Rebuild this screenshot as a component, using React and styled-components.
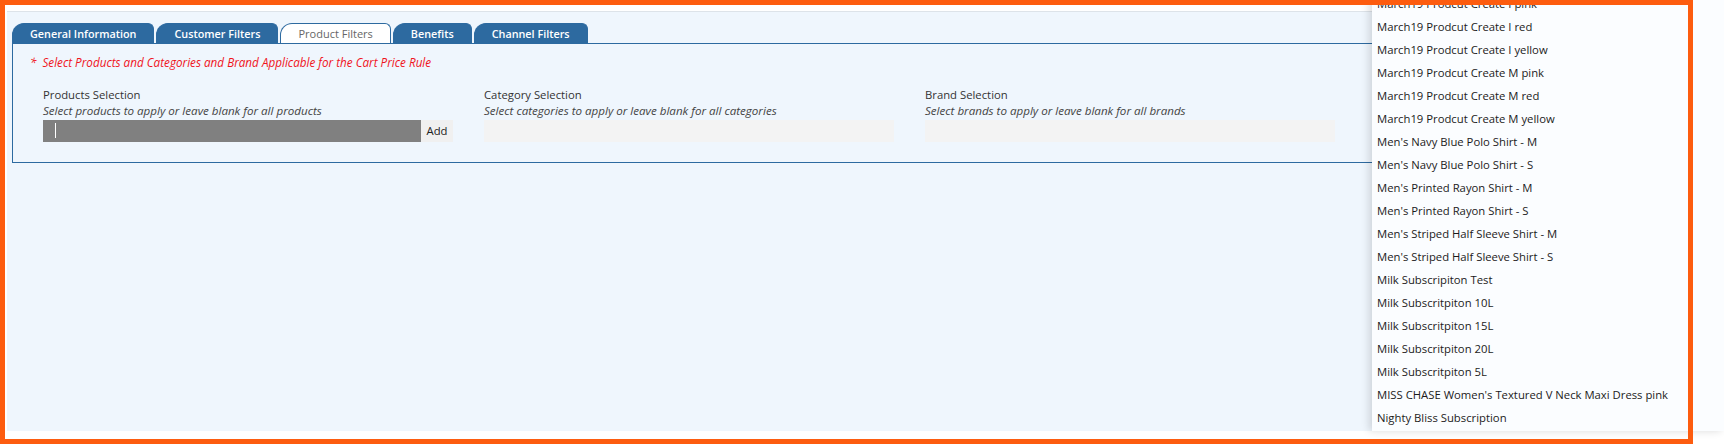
import React from "react";
import styled, { createGlobalStyle } from "styled-components";

const GlobalStyle = createGlobalStyle`
  body {
    margin: 0;
    background: #ffffff;
    font-family: "Open Sans", "Noto Sans", sans-serif;
  }
`;

// outer frame with the orange highlight drawn over everything
const Frame = styled.div`
  position: relative;
  width: 1693px;
  height: 444px;
  box-sizing: border-box;
  padding: 11px 0 13px 7px;

  &::after {
    content: "";
    position: absolute;
    inset: 0;
    border: 5px solid #fd5c0f;
    pointer-events: none;
    z-index: 5;
  }
`;

const Panel = styled.div`
  height: 100%;
  box-sizing: border-box;
  background: #eff6fd;
  border-top: 1px solid #dde3e9;
  padding: 11px 5px 0 5px;
`;

const TabBar = styled.div`
  display: flex;
  gap: 2px;
  height: 20px;
`;

const Tab = styled.div`
  height: 20px;
  box-sizing: border-box;
  padding: 0 17px;
  line-height: 20px;
  font-size: ${({ active }) => (active ? "11px" : "10.8px")};
  font-weight: ${({ active }) => (active ? 400 : 600)};
  color: ${({ active }) => (active ? "#666666" : "#ffffff")};
  background: ${({ active }) => (active ? "#ffffff" : "#2d6aa0")};
  border: 1px solid #2d6aa0;
  border-bottom: none;
  border-radius: 12px 6px 0 0;
  white-space: nowrap;
`;

const Box = styled.div`
  border: 1px solid #2d6aa0;
  padding: 10px 0 20px 17px;
`;

const Note = styled.div`
  line-height: 16px;
  font-size: 11.7px;
  font-style: italic;
  color: #f0141c;

  span {
    margin-right: 6px;
  }
`;

const FieldRow = styled.div`
  display: flex;
  gap: 31px;
  padding-left: 13px;
  margin-top: 16px;
`;

const Field = styled.div`
  width: 410px;
`;

const Label = styled.div`
  line-height: 17px;
  font-size: 11.3px;
  color: #333333;
`;

const Hint = styled.div`
  line-height: 16px;
  font-size: 11.6px;
  font-style: italic;
  color: #444444;
`;

const InputWrap = styled.div`
  display: flex;
  height: 22px;
  margin-top: 1px;
  background: ${({ dark }) => (dark ? "#808080" : "#f3f3f3")};
`;

const InputArea = styled.div`
  flex: 1;
  position: relative;

  &::before {
    content: "";
    position: absolute;
    left: 12px;
    top: 3px;
    width: 1px;
    height: 15px;
    background: #ffffff;
  }
`;

const AddButton = styled.div`
  width: 32px;
  background: #f0f0f0;
  color: #222222;
  font-size: 11.3px;
  line-height: 22px;
  text-align: center;
`;

// open select dropdown lying over the page
const Dropdown = styled.div`
  position: absolute;
  left: 1372px;
  top: -8px;
  width: 352px;
  height: 439px;
  background: #fbfdff;
  box-shadow: -3px 0 8px rgba(0, 0, 0, 0.14);
  overflow: hidden;
  z-index: 3;
`;

const Option = styled.div`
  height: 23px;
  line-height: 23px;
  padding-left: 5px;
  font-size: 11.3px;
  color: #1b1b1b;
  white-space: nowrap;
`;

const tabs = [
  "General Information",
  "Customer Filters",
  "Product Filters",
  "Benefits",
  "Channel Filters",
];

const fields = [
  {
    label: "Products Selection",
    hint: "Select products to apply or leave blank for all products",
    add: true,
  },
  {
    label: "Category Selection",
    hint: "Select categories to apply or leave blank for all categories",
  },
  {
    label: "Brand Selection",
    hint: "Select brands to apply or leave blank for all brands",
  },
];

const options = [
  "March19 Prodcut Create I pink",
  "March19 Prodcut Create I red",
  "March19 Prodcut Create I yellow",
  "March19 Prodcut Create M pink",
  "March19 Prodcut Create M red",
  "March19 Prodcut Create M yellow",
  "Men's Navy Blue Polo Shirt - M",
  "Men's Navy Blue Polo Shirt - S",
  "Men's Printed Rayon Shirt - M",
  "Men's Printed Rayon Shirt - S",
  "Men's Striped Half Sleeve Shirt - M",
  "Men's Striped Half Sleeve Shirt - S",
  "Milk Subscripiton Test",
  "Milk Subscritpiton 10L",
  "Milk Subscritpiton 15L",
  "Milk Subscritpiton 20L",
  "Milk Subscritpiton 5L",
  "MISS CHASE Women's Textured V Neck Maxi Dress pink",
  "Nighty Bliss Subscription",
];

const App = () => {
  return (
    <>
      <GlobalStyle />
      <Frame>
        <Panel>
          <TabBar>
            {tabs.map((t) => (
              <Tab key={t} active={t === "Product Filters"}>
                {t}
              </Tab>
            ))}
          </TabBar>
          <Box>
            <Note>
              <span>*</span>Select Products and Categories and Brand Applicable
              for the Cart Price Rule
            </Note>
            <FieldRow>
              {fields.map((f) => (
                <Field key={f.label}>
                  <Label>{f.label}</Label>
                  <Hint>{f.hint}</Hint>
                  <InputWrap dark={f.add}>
                    {f.add && (
                      <>
                        <InputArea />
                        <AddButton>Add</AddButton>
                      </>
                    )}
                  </InputWrap>
                </Field>
              ))}
            </FieldRow>
          </Box>
        </Panel>
        <Dropdown>
          {options.map((o) => (
            <Option key={o}>{o}</Option>
          ))}
        </Dropdown>
      </Frame>
    </>
  );
};

export default App;
